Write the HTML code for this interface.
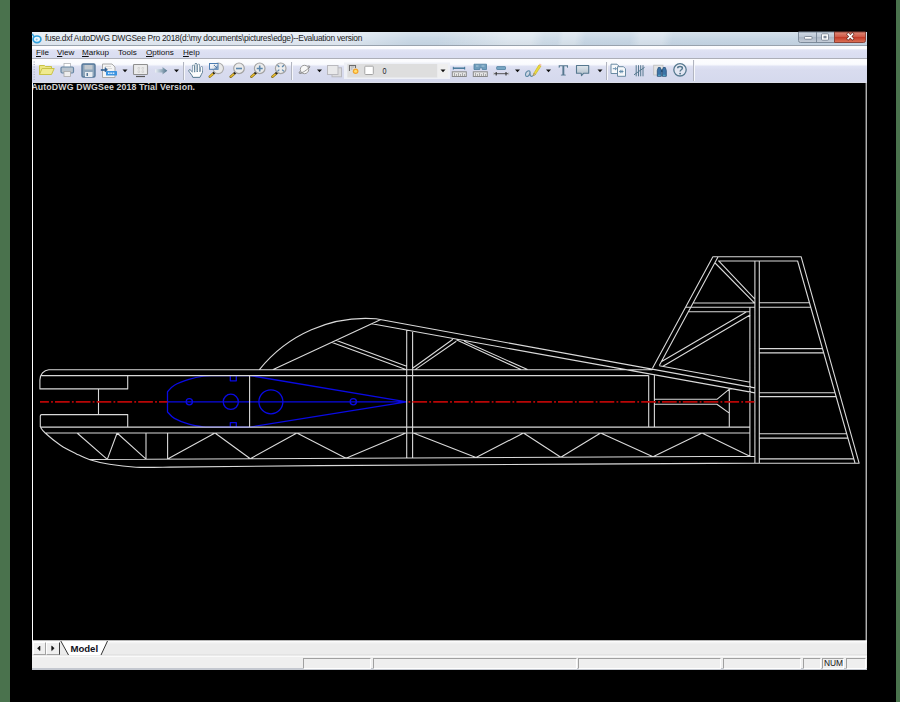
<!DOCTYPE html>
<html>
<head>
<meta charset="utf-8">
<title>fuse.dxf AutoDWG DWGSee Pro 2018</title>
<style>
html,body{margin:0;padding:0;}
body{width:900px;height:702px;overflow:hidden;background:#000;position:relative;font-family:"Liberation Sans",sans-serif;}
.abs{position:absolute;}
#gl{left:0;top:0;width:10px;height:702px;background:#4a724d;}
#gr{left:896px;top:0;width:4px;height:702px;background:#4a724d;}
#win{left:32px;top:32px;width:835px;height:638px;background:#000;overflow:hidden;}
#title{left:0;top:0;width:836px;height:13.300px;background:linear-gradient(180deg,rgba(255,255,255,.28) 0%,rgba(255,255,255,0) 55%,rgba(0,0,40,.03) 100%),linear-gradient(100deg,rgba(255,255,255,0) 400px,rgba(255,255,255,.2) 440px,rgba(255,255,255,.38) 470px,rgba(255,255,255,.38) 493px,rgba(255,255,255,.12) 505px,rgba(255,255,255,.1) 519px,rgba(255,255,255,.3) 524px,rgba(255,255,255,.3) 536px,rgba(255,255,255,0) 546px,rgba(255,255,255,0) 590px,rgba(255,255,255,.28) 600px,rgba(255,255,255,.28) 622px,rgba(255,255,255,0) 632px),linear-gradient(90deg,#e3ebf3 0px,#e1e9f2 310px,#c9d8e5 380px,#c5d5e3 835px);}
#title .txt{left:13px;top:1px;font-size:8.4px;line-height:11px;color:#1c1c1c;white-space:nowrap;letter-spacing:-0.263px;}
#tline{left:0;top:13.3px;width:836px;height:1px;background:#98a2ad;}
#menu{left:0;top:14px;width:836px;height:12px;background:linear-gradient(180deg,#fdfdff 0%,#fbfbfe 22%,#e0e3f4 32%,#dcdff2 60%,#dadef1 100%);}
#menu span{position:absolute;top:1px;font-size:8.1px;line-height:11px;color:#111;white-space:nowrap;}
#menu u{text-decoration:underline;}
#mline{left:0;top:25.5px;width:836px;height:1px;background:#adafb8;}
#tool{left:0;top:26.5px;width:836px;height:24px;background:linear-gradient(180deg,#fcfcfe 0%,#fafbfe 22%,#dfe2f3 31%,#d9dcef 45%,#d5d9ed 94%,#e6e8f2 97%,#c8cad4 100%);}
#tline2{display:none;}
#canvas{left:0;top:50.5px;width:836px;height:558px;background:#000;}
#trial{left:-0.600px;top:-0.500px;font-size:8.800px;font-weight:bold;line-height:11px;color:#d2d2d2;white-space:nowrap;letter-spacing:0.1px;}
#tabs{left:0;top:608px;width:836px;height:16px;background:linear-gradient(180deg,#8c8c8c 0px,#fdfdfd 1.3px,#f4f4f4 2.5px,#ececec 4px,#ececec 14px,#dadada 15px,#fbfbfb 16px);}
#tabs .sb{position:absolute;top:2px;height:13px;width:12px;background:#efefef;border:1px solid;border-color:#fff #a2a2a2 #a2a2a2 #fff;box-sizing:border-box;}
#tabs .mdl{position:absolute;left:38.400px;top:2.600px;font-size:9.6px;line-height:11px;font-weight:bold;color:#101020;}
#status{left:0;top:624px;width:836px;height:14px;background:#efefef;border-top:1px solid #fafafa;border-bottom:2px solid #c4c8d0;box-sizing:border-box;}
#status .p{position:absolute;top:1px;height:11px;border:1px solid;border-color:#a0a0a0 #fff #fff #a0a0a0;box-sizing:border-box;}
#status .num{position:absolute;left:792px;top:2px;font-size:8.4px;line-height:9px;color:#111;}
</style>
</head>
<body>
<div id="gl" class="abs"></div>
<div id="gr" class="abs"></div>
<div id="win" class="abs">
  <div id="title" class="abs">
    <div class="txt abs">fuse.dxf AutoDWG DWGSee Pro 2018(d:\my documents\pictures\edge)--Evaluation version</div>
  </div>
  <div id="tline" class="abs"></div>
  <div id="menu" class="abs">
    <span style="left:4px"><u>F</u>ile</span>
    <span style="left:25px"><u>V</u>iew</span>
    <span style="left:50px"><u>M</u>arkup</span>
    <span style="left:86px">Tools</span>
    <span style="left:114px"><u>O</u>ptions</span>
    <span style="left:151px"><u>H</u>elp</span>
  </div>
  <div id="mline" class="abs"></div>
  <div id="tool" class="abs"></div>
  <div id="tline2" class="abs"></div>
  <div id="canvas" class="abs">
    <div id="trial" class="abs">AutoDWG DWGSee 2018 Trial Version.</div>
  </div>
  <div id="tabs" class="abs">
    <div class="sb" style="left:1px;width:12.500px"></div><div class="sb" style="left:14px;width:14px;border-right:1.500px solid #3a3a3a"></div>
    <svg class="abs" style="left:0;top:0" width="120" height="16" viewBox="0 0 120 16">
      <path d="M28.800 1.300H75.500L69 15H36.500Z" fill="#fff" stroke="none"/>
      <path d="M28.800 1L36.500 15M75.500 1L69 15" stroke="#333" stroke-width="1" fill="none"/>
      <path d="M8 6L5.500 8.300L8 10.600ZM19.700 6L22.200 8.300L19.700 10.600Z" fill="#111" stroke="#111" stroke-width=".6" stroke-linejoin="round"/>
    </svg>
    <div class="mdl">Model</div>
  </div>
  <div id="status" class="abs">
    <div class="p" style="left:271px;width:68px"></div>
    <div class="p" style="left:341px;width:204px"></div>
    <div class="p" style="left:546px;width:143px"></div>
    <div class="p" style="left:691px;width:78px"></div>
    <div class="p" style="left:771px;width:18px"></div>
    <div class="p" style="left:790px;width:22px"></div>
    <div class="p" style="left:814px;width:20px"></div>
    <div class="num">NUM</div>
  </div>
</div>
<svg id="dwg" class="abs" style="left:0;top:0" width="900" height="702" viewBox="0 0 900 702" fill="none" stroke="#d9d9d9" stroke-width="1.100" stroke-linecap="butt" stroke-linejoin="round">
<path d="M32.500 83V641M866.200 83V641" stroke="#fff" stroke-width="1"/>
<g stroke="#0a0ae4" stroke-width="1.300">
<path d="M167.5 391.7C168.7 390.6 170.8 387.2 174.4 385.2C178.0 383.1 184.1 380.9 188.9 379.4C193.7 377.9 199.3 376.7 203.3 376.1C207.3 375.5 211.4 375.7 213.0 375.6H250L406.700 401.800L250 427.050H213C211.4 427.0 207.3 427.4 203.3 426.9C199.3 426.4 193.7 425.6 188.9 424.2C184.1 422.8 178.0 420.4 174.4 418.4C170.8 416.3 168.7 413.0 167.5 411.9ZM167.5 401.8L406.7 401.8M230.300 375.600V380.800H236.300V375.600M230.300 427V422.700H236.300V427"/>
<circle cx="189.300" cy="401.800" r="3.100"/><circle cx="230.800" cy="401.800" r="7.600"/><circle cx="270.900" cy="401.800" r="12"/><circle cx="353.300" cy="401.800" r="3.100"/>
</g>
<path d="M48.8 369.7L652.3 369.7M41.5 375.6L648.7 375.6M40.3 427.1L749.9 427.1M45.2 433.0L749.9 433.0M89.9 459.5L754.9 456.3M40.3 427.0C41.1 428.0 41.8 429.9 45.2 433.0C48.6 436.1 55.3 441.8 60.5 445.3C65.7 448.8 71.5 451.5 76.4 453.9C81.3 456.3 84.4 458.0 89.9 459.7C95.4 461.4 101.8 463.1 109.5 464.3C117.2 465.6 125.9 466.7 136.0 467.2C146.1 467.7 164.3 467.1 170.0 467.1L320 465.6L580 464.1L754.9 463.1M48.8 369.7A9.5 10.3 0 0 0 39.9 380V388.9H127.7V375.6M98.5 388.9L98.5 414.6M40.3 427V416Q40.3 414.600 41.7 414.600H127.700V427M77.1 433.0L107.3 459.4L117.1 433.0L146.0 459.2M146.0 433.0L146.0 459.2M167.6 433.0L167.6 459.1M167.6 459.1L215.0 433.0L250.3 458.7L296.9 433.0L346.0 458.3L405.9 433.0M413.3 433.0L476.0 457.6L523.5 433.0L560.8 457.2L600.6 433.0L653.0 456.8L702.0 433.0L749.9 456.3M249.6 375.6L249.6 427.0M406.7 330.1L406.7 458.0M412.6 331.2L412.6 457.9M259.400 369.700A136 136 0 0 1 376 318.8L754.9 387.9M371.8 323.8L754.9 392.9M272.7 369.7L380.3 319.8M332.2 342.5L405.8 369.5M335.9 340.2L406.7 366.3M412.6 368.2L452.9 339.3M415.1 369.6L456.3 341.2M456.3 339.8L520.9 369.6M464.2 341.2L527.5 369.6M648.7 375.6L648.7 427.0M654.4 375.6L654.4 427.0M654.4 399.3L716.9 399.3L729.3 389.1M654.4 404.3L716.9 404.3L729.3 413.1M729.3 388.5L729.3 427.0M749.9 307.8L749.9 456.3M754.9 261.0L754.9 463.1M759.3 261.0L759.3 463.1M652.5 368.2L712.9 256.7L801.1 256.7L859.1 463.2L754.9 463.2M659.3 365.6L718.1 256.7M718.0 261.0L797.6 261.0L855.0 463.0M659.3 365.8L750.2 382.2M693.2 303.0L754.9 303.0M685.7 307.3L754.9 307.3M688.4 311.8L749.9 311.8M715.1 263.0L754.1 302.7M718.7 260.8L754.9 299.1M746.2 312.1L661.2 361.7M750.5 314.7L663.0 366.3M759.3 302.8L809.5 302.8M759.3 307.2L810.7 307.2M759.3 348.6L822.5 348.6M759.3 352.9L823.7 352.9M759.3 392.7L835.0 392.7M759.3 396.6L836.1 396.6M759.3 433.8L846.7 433.8M759.3 438.1L847.9 438.1M759.3 458.9L853.8 458.9"/>
<path d="M40 401.800H167.500" stroke="#b90606" stroke-width="1.700" stroke-dasharray="14.700 2.200 1.800 2.100" stroke-dashoffset="5.800"/>
<path d="M406.700 401.800H754.400" stroke="#b90606" stroke-width="1.700" stroke-dasharray="14.700 2.200 1.800 2.100" stroke-dashoffset="15.100"/>
</svg>
<svg id="tb" class="abs" style="left:0;top:0" width="900" height="702" viewBox="0 0 900 702" fill="none">
<!-- app icon -->
<g>
<ellipse cx="37" cy="39.300" rx="3.900" ry="3.300" fill="#eef7fd" stroke="#2e9fdc" stroke-width="1.700"/>
<circle cx="36.700" cy="39.500" r="1" fill="#7cc4ea"/>
<path d="M32.300 33.800C32.800 35.200 33.400 36.200 34.500 36.900" stroke="#2e9fdc" stroke-width="1.500" fill="none"/>
</g>
<!-- window buttons -->
<defs>
<linearGradient id="gb" x1="0" y1="0" x2="0" y2="1"><stop offset="0" stop-color="#d3dce7"/><stop offset=".45" stop-color="#bcc7d4"/><stop offset=".5" stop-color="#aab6c5"/><stop offset="1" stop-color="#c6ced9"/></linearGradient>
<linearGradient id="gc" x1="0" y1="0" x2="0" y2="1"><stop offset="0" stop-color="#e08a78"/><stop offset=".45" stop-color="#cf5a48"/><stop offset=".5" stop-color="#c23a28"/><stop offset="1" stop-color="#dc7358"/></linearGradient>
<linearGradient id="garrow" x1="0" y1="0" x2="1" y2="0"><stop offset="0" stop-color="#eef2f8"/><stop offset=".5" stop-color="#9fb4c4"/><stop offset="1" stop-color="#4f7188"/></linearGradient>
<linearGradient id="gbub" x1="0" y1="0" x2="0" y2="1"><stop offset="0" stop-color="#dfe6ec"/><stop offset="1" stop-color="#aebcc8"/></linearGradient>
</defs>

<!-- ===== toolbar icons ===== -->
<g id="icons">
<!-- grip -->
<path d="M33.500 62H35M33.500 64.500H35M33.500 67H35M33.500 69.500H35M33.500 72H35M33.500 74.500H35M33.500 77H35M33.500 79.500H35" stroke="#b4b8c6" stroke-width="1"/>
<!-- folder -->
<path d="M39.500 74.500V65.500H44.500L45.500 66.500H51.500V68.500" fill="#ece684" stroke="#c9c349" stroke-width="1"/>
<path d="M39.500 74.500L42 68.500H54.200L51.500 74.500Z" fill="#f0ea90" stroke="#c9c349" stroke-width="1"/>
<!-- printer -->
<rect x="64" y="63.500" width="6.500" height="4" fill="#fff" stroke="#b0b4b8" stroke-width=".8"/>
<rect x="61" y="67" width="12.500" height="6" rx="1.200" fill="#b9c4cf" stroke="#6786a4" stroke-width="1.200"/>
<rect x="64" y="71.500" width="6.500" height="5" fill="#eee" stroke="#a8a8a8" stroke-width=".8"/>
<!-- floppy -->
<rect x="82" y="64" width="13" height="13" rx="1.300" fill="#8fa6bb" stroke="#56789a" stroke-width="1.400"/>
<rect x="84.500" y="65" width="8" height="4.500" fill="#c2c8ce"/>
<rect x="85" y="72" width="7.500" height="5" fill="#e9edf1"/>
<rect x="86.500" y="73" width="1.500" height="3" fill="#56789a"/>
<!-- convert -->
<path d="M102.500 64H112L115 67V77.500H102.500Z" fill="#f4f4f4" stroke="#a9a9a9" stroke-width="1"/>
<path d="M105 66.500H111M105 68.500H112" stroke="#d0d0d0" stroke-width=".8"/>
<path d="M101 69.500H105V67.500L107.500 69.800L105 72V70.500H101Z" fill="#2f5f92" stroke="#2f5f92" stroke-width=".6"/>
<rect x="106" y="71" width="11" height="4.500" rx=".6" fill="#3a93e0"/>
<path d="M108 73.300H115" stroke="#d8ecfb" stroke-width="1.400" stroke-dasharray="1.600 .7"/>
<!-- dd arrows -->
<g fill="#111">
<path d="M122.500 69.500H127.500L125 72.200Z"/>
<path d="M174 69.500H179L176.500 72.200Z"/>
<path d="M317 69.500H322L319.500 72.200Z"/>
<path d="M440.500 69.500H445.500L443 72.200Z"/>
<path d="M515 69.500H520L517.500 72.200Z"/>
<path d="M546 69.500H551L548.500 72.200Z"/>
<path d="M597.500 69.500H602.500L600 72.200Z"/>
</g>
<!-- monitor -->
<rect x="133.500" y="64.500" width="14" height="10" rx=".8" fill="#ebebeb" stroke="#8f8f8f" stroke-width="1.100"/>
<path d="M138 67.500h1.600v1.600h-1.600zM142 67.500h1.600v1.600h-1.600zM138 70.800h1.600v1.600h-1.600zM142 70.800h1.600v1.600h-1.600z" stroke="#c4c4c4" stroke-width=".6" fill="#f6f6f6"/>
<path d="M136 76.500H145" stroke="#555" stroke-width="1.200"/>
<!-- arrow -->
<path d="M155 69.200H162.500V67L167.300 70.800L162.500 74.600V72.400H155Z" fill="url(#garrow)"/>
<!-- separators -->
<g stroke-width="1">
<path d="M183.500 62V80M291.500 62V80M606.500 62V80M693.500 60V81" stroke="#b2b5c0"/>
<path d="M184.500 62V80M292.500 62V80M607.500 62V80M694.500 60V81" stroke="#f6f7fb"/>
</g>
<!-- hand -->
<g stroke-linecap="round" stroke-linejoin="round">
<path d="M193.300 71V66M195.900 70V64.300M198.600 70.500V64.900M201.300 72L201.700 67.400" stroke="#5b7c93" stroke-width="2.500"/>
<path d="M192.700 77C192.100 75 190.200 73.200 188.900 71.300C188.300 70.200 189.400 69.200 190.400 70L192.300 71.900L202.400 71C202.400 72.500 201.900 73.500 201.300 74.600L200.100 77Z" fill="#fdfdfd" stroke="#56788f" stroke-width="1"/>
<path d="M193.300 72.500V66M195.900 72.500V64.300M198.600 72.500V64.900M201.300 72.500L201.700 67.400" stroke="#fdfdfd" stroke-width="1.300"/>
</g>
<!-- magnifier handles -->
<g stroke-linecap="round">
<path d="M214.200 72.700L209.800 76.600M235 73L230.700 76.700M255.700 73L251.400 76.700M276.700 73L272.400 76.700" stroke="#806a20" stroke-width="2.500"/>
<path d="M213.200 73.600L210 76.400M234 73.900L230.900 76.500M254.700 73.900L251.600 76.500M275.700 73.900L272.600 76.500" stroke="#e6b92c" stroke-width="1.500"/>
<path d="M214.600 72.300L213.800 73M235.400 72.600L234.600 73.300M256.100 72.600L255.300 73.300M277.100 72.600L276.300 73.300" stroke="#222" stroke-width="2"/>
</g>
<!-- zoom window -->
<circle cx="218.200" cy="68.300" r="5.300" fill="#e9e9e9" stroke="#a9a9a9" stroke-width="1.100"/>
<rect x="209.500" y="63.500" width="8.500" height="5.800" fill="#f3f6fa" fill-opacity=".75" stroke="#4d7db2" stroke-width="1"/>
<path d="M214 65L217 68.200M217 65.500V68.200H214.300" stroke="#3f6da0" stroke-width=".9"/>
<!-- zoom out -->
<circle cx="239" cy="68.300" r="5.300" fill="#ebebeb" stroke="#a3a3a3" stroke-width="1.200"/>
<path d="M236 68.500H242" stroke="#5b86ad" stroke-width="1.600"/>
<!-- zoom in -->
<circle cx="259.700" cy="68.300" r="5.300" fill="#ebebeb" stroke="#a3a3a3" stroke-width="1.200"/>
<path d="M256.700 68.500H262.700M259.700 65.500V71.500" stroke="#5b86ad" stroke-width="1.600"/>
<!-- zoom extents -->
<circle cx="280.700" cy="68.300" r="5.300" fill="#ebebeb" stroke="#a3a3a3" stroke-width="1.200"/>
<path d="M277.500 65.200L279.300 67M283.900 65.200L282.100 67M277.500 71.400L279.300 69.600M283.900 71.400L282.100 69.600" stroke="#5b86ad" stroke-width="1.300"/>
<!-- orbit -->
<ellipse cx="304.500" cy="69.700" rx="6.300" ry="1.700" transform="rotate(-33 304.500 69.700)" fill="none" stroke="#8a8a8a" stroke-width=".9"/>
<circle cx="304.500" cy="69.500" r="4.200" fill="#f8f8f8" stroke="#999" stroke-width="1"/>
<path d="M299.300 72.800C300.500 73.600 305 72 309.600 67" stroke="#8a8a8a" stroke-width=".9" fill="none"/>
<!-- layers -->
<rect x="332" y="67.800" width="9.500" height="9" fill="#dcdcde" stroke="#b9b9be" stroke-width="1"/>
<rect x="327.500" y="65.500" width="10.500" height="9" fill="#e9e9ea" stroke="#b9b9be" stroke-width="1"/>
<!-- combo -->
<rect x="344" y="62.500" width="106" height="16.500" fill="#eef0f6"/>
<rect x="347.300" y="64" width="90.200" height="13.500" fill="#dedede"/>
<rect x="437.500" y="64" width="10.500" height="13.500" fill="#efefef"/>
<path d="M349.500 71V65.500H355.500V68" stroke="#6c6c6c" stroke-width="1.100"/>
<path d="M351 67H354M351 69H352.500" stroke="#9a9a9a" stroke-width=".7"/>
<circle cx="355.600" cy="71.200" r="2.800" fill="#f3a32a"/>
<circle cx="355.600" cy="71.200" r="1.500" fill="#ffe070"/>
<rect x="364.800" y="66.200" width="8.500" height="8.300" rx=".8" fill="#fff" stroke="#a4a4a4" stroke-width="1"/>
<!-- ruler 1 -->
<path d="M453 68.200H465" stroke="#46789a" stroke-width="1.500"/>
<path d="M453.300 66.800V69.600M464.700 66.800V69.600" stroke="#46789a" stroke-width="1"/>
<rect x="452.300" y="71.800" width="14" height="4.700" fill="#e6e6e6" stroke="#8a8a8a" stroke-width="1"/>
<path d="M454.500 73V76M456.500 74V76M458.500 73V76M460.500 74V76M462.500 73V76M464.500 74V76" stroke="#9a9a9a" stroke-width=".8"/>
<!-- ruler 2 -->
<path d="M474 64.200H486.500V69.500H482.200V67.800H479.800V69.500H474Z" fill="#6f9dbc" stroke="#4f7f9f" stroke-width=".8"/>
<path d="M476 66H478.500M481.500 66H484.500" stroke="#b5d0e2" stroke-width=".9"/>
<rect x="473.300" y="71.800" width="14" height="4.700" fill="#e6e6e6" stroke="#8a8a8a" stroke-width="1"/>
<path d="M475.500 73V76M477.500 74V76M479.500 73V76M481.500 74V76M483.500 73V76M485.500 74V76" stroke="#9a9a9a" stroke-width=".8"/>
<!-- dim 3 -->
<rect x="496.700" y="66.600" width="8.800" height="2.900" rx=".5" fill="#7aa7c4" stroke="#4f7f9f" stroke-width=".8"/>
<path d="M494 73.700H508.500" stroke="#555" stroke-width="1"/>
<path d="M496.200 72V75.500M506 72V75.500" stroke="#333" stroke-width="1.100"/>
<path d="M493.700 72.300V75.200M508.700 72.300V75.200" stroke="#bbb" stroke-width=".8"/>
<!-- scribble + pencil -->
<path d="M530 71.400C529 70 526.600 71 525.800 73C525 75.200 525.800 76.900 527.500 76.400C529 75.900 530 73.500 530.100 71.400C530 74.500 530.200 76.400 531.500 76.400C532.400 76.400 533 75.800 533.400 75.200" stroke="#5f8aa6" stroke-width="1.100" fill="#c8d4dd" fill-opacity=".6"/>
<path d="M533.200 75.700L533.900 73.200L539 64.800L541 66L535.400 74.500Z" fill="#ecdc3a" stroke="#c9b528" stroke-width=".7"/>
<path d="M533.200 75.700L533.900 73.200L535.400 74.500Z" fill="#e8d0a8" stroke="#8a7a50" stroke-width=".5"/>
<path d="M539 64.800L539.800 63.600L541.700 64.800L541 66Z" fill="#f4c0b0"/>
<!-- T -->
<path d="M558.700 65.200H568V67.700H567.200L566.700 66.300H564.300V74.400L565.800 74.800V75.500H560.900V74.800L562.400 74.400V66.300H560L559.500 67.700H558.700Z" fill="#56788f"/>
<!-- bubble -->
<path d="M576.500 65.500H588.700V73.300H583.500L581.500 75.600L581.200 73.300H576.500Z" fill="url(#gbub)" stroke="#56788f" stroke-width="1.100" stroke-linejoin="round"/>
<!-- copy docs -->
<path d="M611 64.200H617L619 66.200V73.500H611Z" fill="#f6f8fa" stroke="#6a8aa2" stroke-width="1"/>
<path d="M617.500 66.700H623.500L625.500 68.700V76.300H617.500Z" fill="#f6f8fa" stroke="#6a8aa2" stroke-width="1"/>
<path d="M612.800 68.700H616.200M615 67.300L616.500 68.700L615 70.100" stroke="#5a86a6" stroke-width=".9"/>
<path d="M619.500 71.500H623.500M620.800 70.100L619.300 71.500L620.800 72.900M622 69.800V73.200" stroke="#5a86a6" stroke-width=".9"/>
<!-- tally -->
<path d="M636.200 65.200V76.300M638.500 65.200V76.300M640.700 65.200V76.300M643 65.200V76.300M634 74.800L644.600 67.300" stroke="#56788f" stroke-width="1"/>
<!-- binoculars -->
<rect x="653.700" y="65.200" width="9.300" height="9.800" fill="#e3e3e3" stroke="#bdbdbd" stroke-width=".8"/>
<path d="M657.300 76.300V70.500L658.300 67.500H660.300L661.300 70.500V76.300Z" fill="#3d74a8" stroke="#274f78" stroke-width=".8"/>
<path d="M662.300 76.300V70.500L663.300 67.500H665.300L666.300 70.500V76.300Z" fill="#3d74a8" stroke="#274f78" stroke-width=".8"/>
<path d="M661 69.500H662.600V72H661Z" fill="#274f78"/>
<path d="M658 75.300H660.600M663 75.300H665.600" stroke="#58b0c8" stroke-width="1"/>
<!-- help -->
<circle cx="680" cy="69.800" r="6.200" fill="#eef1f6" fill-opacity=".5" stroke="#56788f" stroke-width="1.300"/>
<path d="M677.700 68.200C677.700 66 682.400 66 682.400 68.200C682.400 69.700 680.100 69.800 680.100 71.500" stroke="#56788f" stroke-width="1.500" fill="none"/>
<circle cx="680.100" cy="73.600" r=".95" fill="#56788f"/>
</g>
<text x="382.400" y="74" font-family="Liberation Sans, sans-serif" font-size="9.400" textLength="4" lengthAdjust="spacingAndGlyphs" fill="#1a1a2a">0</text>
<path d="M440.500 69.500H445.500L443 72.200Z" fill="#111"/>
<path d="M798.500 32V40.500Q798.500 42.500 800.500 42.500H834.500V32Z" fill="url(#gb)" stroke="#7d8b9b" stroke-width="1"/>
<path d="M834.500 32V42.500H863.500Q865.500 42.500 865.500 40.500V32Z" fill="url(#gc)" stroke="#8a4238" stroke-width="1"/>
<path d="M816.500 32V42.500" stroke="#7d8b9b"/>
<rect x="804.500" y="36.500" width="7.500" height="2.700" rx=".8" fill="#fff" stroke="#6b7686" stroke-width=".8"/>
<rect x="821.500" y="33.800" width="7" height="6.400" rx="1" fill="#fff" stroke="#6b7686" stroke-width=".8"/>
<rect x="823.500" y="35.800" width="3" height="2.500" fill="#7f8a99"/>
<path d="M848.200 34.200L852.400 38.600M852.400 34.200L848.200 38.600" stroke="#6a3028" stroke-width="3" stroke-linecap="square"/>
<path d="M848.200 34.200L852.400 38.600M852.400 34.200L848.200 38.600" stroke="#fff" stroke-width="1.700" stroke-linecap="square"/>
</svg>
</body>
</html>
